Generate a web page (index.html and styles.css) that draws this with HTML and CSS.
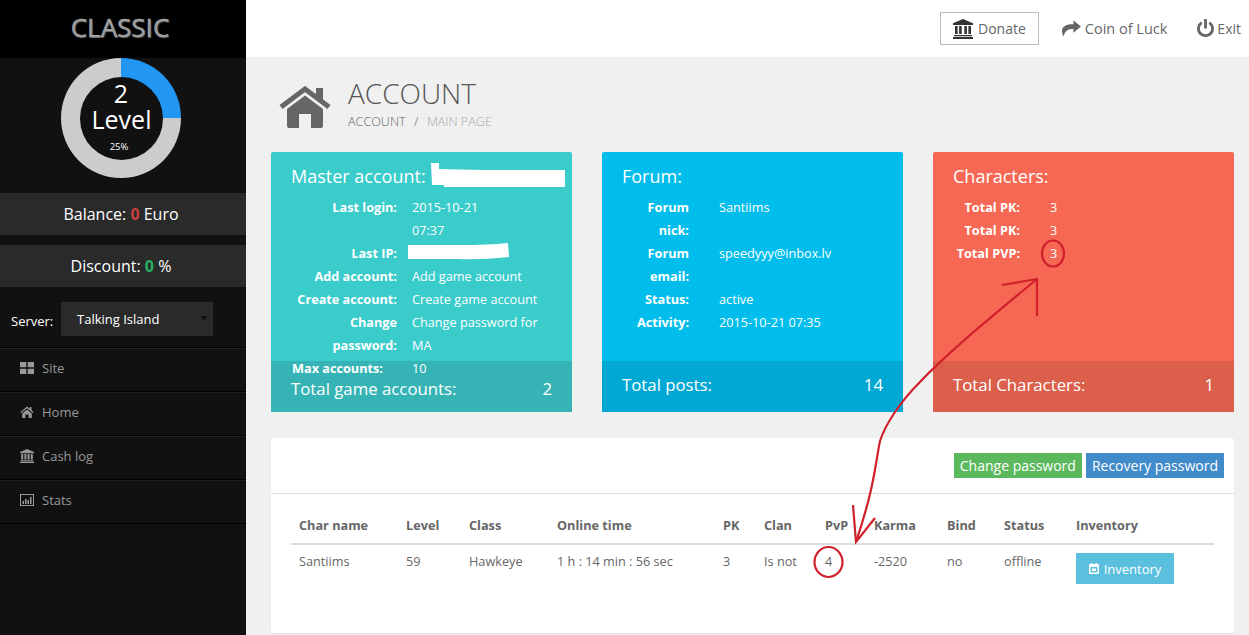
FILE: index.html
```html
<!DOCTYPE html>
<html>
<head>
  <title>Classic - Account</title>
  <link rel="stylesheet" href="styles.css">
</head>
<body>
<div class="app">
  <aside class="sidebar">
    <div class="logo">CLASSIC</div>
    <div class="donut">
      <div class="donut-inner">
        <span class="donut-num">2</span>
        <span class="donut-label">Level</span>
        <span class="donut-pct">25%</span>
      </div>
    </div>
    <div class="stat-bar">Balance: <b class="red">0</b> Euro</div>
    <div class="stat-bar">Discount: <b class="green">0</b> %</div>
    <div class="server">
      <span class="server-label">Server:</span>
      <div class="server-select">Talking Island</div>
    </div>
    <ul class="menu">
      <li><svg class="menu-icon" viewBox="0 0 14 12"><path d="M0 0h6.300v5.300H0zM7.700 0H14v5.300H7.700zM0 6.700h6.300V12H0zM7.700 6.700H14V12H7.700z"/></svg>Site</li>
      <li><svg class="menu-icon" viewBox="0 0 14 12"><path d="M7 0.500 0.300 6.200l.8.900L7 2.200l5.900 4.900.8-.9-2.200-1.900V1h-1.800v1.700zM2.200 7.400V12h3.200V8.600h3.200V12h3.200V7.400L7 3.400z"/></svg>Home</li>
      <li><svg class="menu-icon" viewBox="0 0 14 14"><path d="M7 0 14 3v1.200H0V3zM1.200 5h2v5.500h-2zM4.400 5h2v5.500h-2zM7.600 5h2v5.500h-2zM10.800 5h2v5.500h-2zM.6 11.300h12.800v1H.6zM0 12.800h14V14H0z"/></svg>Cash log</li>
      <li><svg class="menu-icon" viewBox="0 0 14 12"><path d="M0 0h14v12H0zM1 1v10h12V1zM2.500 7h1.500v3H2.500zM5 5h1.500v5H5zM7.500 6h1.500v4H7.500zM10 3h1.500v7H10z" fill-rule="evenodd"/></svg>Stats</li>
    </ul>
  </aside>

  <main class="main">
    <header class="topbar">
      <a class="top-btn boxed">
        <svg class="top-icon dark" viewBox="0 0 20 20"><path d="M10 0 20 4.200V6H0V4.200zM2 7h2.600v8H2zM6.100 7h2.600v8H6.100zM11.300 7h2.600v8h-2.600zM15.400 7H18v8h-2.600zM1 16h18v1.300H1zM0 18h20v2H0z"/></svg>Donate
      </a>
      <a class="top-btn coin"><svg class="top-icon share" viewBox="0 0 20 17"><path d="M12 0l8 6.500-8 6.500V9C6.500 9 3 10.500 1.800 17 .4 14.500 0 12.500 0 11c0-5 5-7 12-7z"/></svg>Coin of Luck</a>
      <a class="top-btn exit"><svg class="top-icon power" viewBox="0 0 18 20"><path d="M7.500 0h3v10h-3z"/><path d="M5 3.800a7.500 7.500 0 1 0 8 0" fill="none" stroke="currentColor" stroke-width="3"/></svg>Exit</a>
    </header>

    <section class="page-head">
      <svg class="page-icon" viewBox="0 0 52 42"><path d="M2 21 26 3l24 18" fill="none" stroke="#666" stroke-width="5"/><path d="M37 2h7v12l-7-5zM8 23 26 9.500 44 23v17a2 2 0 0 1-2 2H32V28H20v14H10a2 2 0 0 1-2-2z" fill="#666"/></svg>
      <div>
        <h1>ACCOUNT</h1>
        <div class="crumbs"><span>ACCOUNT</span><i>/</i><span class="crumb-last">MAIN PAGE</span></div>
      </div>
    </section>

    <section class="cards">
      <div class="card teal">
        <div class="card-body">
          <h3>Master account:</h3>
          <dl class="info info-teal">
            <dt>Last login:</dt><dd>2015-10-21<br>07:37</dd>
            <dt>Last IP:</dt><dd>&nbsp;</dd>
            <dt>Add account:</dt><dd>Add game account</dd>
            <dt>Create account:</dt><dd>Create game account</dd>
            <dt>Change<br>password:</dt><dd>Change password for<br>MA</dd>
            <dt class="left">Max accounts:</dt><dd>10</dd>
          </dl>
        </div>
        <div class="card-foot"><span>Total game accounts:</span><span>2</span></div>
      </div>

      <div class="card blue">
        <div class="card-body">
          <h3>Forum:</h3>
          <dl class="info info-blue">
            <dt>Forum<br>nick:</dt><dd>Santiims</dd>
            <dt>Forum<br>email:</dt><dd>speedyyy@inbox.lv</dd>
            <dt>Status:</dt><dd>active</dd>
            <dt>Activity:</dt><dd>2015-10-21 07:35</dd>
          </dl>
        </div>
        <div class="card-foot"><span>Total posts:</span><span>14</span></div>
      </div>

      <div class="card coral">
        <div class="card-body">
          <h3>Characters:</h3>
          <dl class="info info-blue">
            <dt>Total PK:</dt><dd>3</dd>
            <dt>Total PK:</dt><dd>3</dd>
            <dt>Total PVP:</dt><dd>3</dd>
          </dl>
        </div>
        <div class="card-foot"><span>Total Characters:</span><span>1</span></div>
      </div>
    </section>

    <section class="panel">
      <div class="panel-head">
        <a class="btn btn-green">Change password</a>
        <a class="btn btn-blue">Recovery password</a>
      </div>
      <div class="panel-body">
        <table class="chars">
          <colgroup>
            <col class="c1"><col class="c2"><col class="c3"><col class="c4"><col class="c5"><col class="c6">
            <col class="c7"><col class="c8"><col class="c9"><col class="c10"><col>
          </colgroup>
          <thead>
            <tr><th>Char name</th><th>Level</th><th>Class</th><th>Online time</th><th>PK</th><th>Clan</th><th>PvP</th><th>Karma</th><th>Bind</th><th>Status</th><th>Inventory</th></tr>
          </thead>
          <tbody>
            <tr>
              <td>Santiims</td><td>59</td><td>Hawkeye</td><td>1 h : 14 min : 56 sec</td><td>3</td><td>Is not</td><td>4</td><td>-2520</td><td>no</td><td>offline</td>
              <td><a class="btn-inv"><svg class="inv-icon" viewBox="0 0 10 11"><path fill-rule="evenodd" d="M2 0h1.500v1h3V0H8v1h1a1 1 0 0 1 1 1v8a1 1 0 0 1-1 1H1a1 1 0 0 1-1-1V2a1 1 0 0 1 1-1h1zM1.500 4v5.500h7V4zM3 5.500h4V8H3z"/></svg>Inventory</a></td>
            </tr>
          </tbody>
        </table>
      </div>
    </section>
  </main>
</div>

<!-- hand drawn marks on top of the page -->
<svg class="marks" viewBox="0 0 1249 635">
  <path d="M431 163h8v6l45 1h81v17H444v-2h-12z" fill="#fff"/>
  <path d="M408 245h50q30 0 50-2l1 14q-30 3-52 2h-49z" fill="#fff"/>
  <g fill="none" stroke="#d0202c" stroke-width="2.200">
    <ellipse cx="1053" cy="253.500" rx="11" ry="13"/>
    <path d="M1002 285q18-3 35-6l0 37"/>
    <path d="M1037 279C1000 310 950 350 920 382C900 402 885 425 880 441C875 465 875 485 856 542"/>
    <path d="M853 505L856 542L875 518"/>
    <ellipse cx="828.500" cy="562" rx="14" ry="15"/>
  </g>
</svg>
</body>
</html>
```

FILE: styles.css
```css
* {
  box-sizing: border-box;
}
body {
  margin: 0;
  height: 635px;
  overflow: hidden;
  position: relative;
  font-family: "Open Sans", sans-serif;
  font-size: 12.7px;
  color: #666;
  background: #f0f0f0;
}
.app {
  display: flex;
  height: 635px;
}

/* sidebar */
.sidebar {
  width: 246px;
  flex-shrink: 0;
  background: #111;
  color: #fff;
}
.logo {
  height: 58px;
  padding-right: 6px;
  background: #000;
  color: #999;
  font-size: 26px;
  line-height: 54px;
  text-align: center;
  -webkit-text-stroke: 0.4px #bbb;
  text-shadow: 1px 1px 1px #555;
}
.donut {
  width: 120px;
  height: 120px;
  margin: 0 0 15px 61px;
  border-radius: 50%;
  background: conic-gradient(#2196f3 25%, #ccc 0);
  display: flex;
  align-items: center;
  justify-content: center;
}
.donut-inner {
  width: 83px;
  height: 83px;
  border-radius: 50%;
  background: #111;
  display: flex;
  flex-direction: column;
  align-items: center;
}
.donut-num {
  font-size: 25px;
  line-height: 26px;
  margin-top: 3px;
}
.donut-label {
  font-size: 25px;
  line-height: 26px;
  margin-left: 1px;
}
.donut-pct {
  font-size: 9.500px;
  line-height: 12px;
  margin-top: 9px;
  margin-right: 4px;
}
.stat-bar {
  height: 42px;
  margin-bottom: 10px;
  padding-right: 4px;
  background: #2a2a2a;
  font-size: 16px;
  line-height: 42px;
  text-align: center;
}
.red {
  color: #c9403c;
}
.green {
  color: #27ae60;
}
.server {
  display: flex;
  align-items: center;
  height: 60px;
  padding: 4px 0 0 11px;
  margin-top: -10px;
  font-size: 13px;
}
.server-label {
  width: 50px;
  margin-top: 4px;
}
.server-select {
  position: relative;
  width: 152px;
  height: 34px;
  padding-left: 16px;
  background: #2a2a2a;
  line-height: 34px;
}
.server-select::after {
  content: "";
  position: absolute;
  right: 6px;
  top: 14px;
  border: 3.500px solid transparent;
  border-top: 5px solid #111;
}
.menu {
  list-style: none;
  margin: 0;
  padding: 0;
  border-bottom: 1px solid #000;
  font-size: 13px;
}
.menu li {
  display: flex;
  align-items: center;
  height: 44px;
  padding: 0 0 4px 20px;
  border-top: 1px solid #000;
  box-shadow: inset 0 1px 0 #1f1f1f;
  color: #999;
}
.menu-icon {
  width: 14px;
  height: 14px;
  margin-right: 8px;
  fill: #999;
}

/* top bar */
.main {
  flex: 1;
  min-width: 0;
}
.topbar {
  display: flex;
  justify-content: flex-end;
  align-items: center;
  height: 57px;
  padding-right: 8px;
  background: #fff;
  font-size: 14px;
}
.top-btn {
  display: flex;
  align-items: center;
  color: #666;
}
.top-btn.boxed {
  height: 33px;
  padding: 0 12px;
  margin-right: 23px;
  border: 1px solid #bbb;
}
.top-btn.coin {
  font-size: 14.500px;
}
.top-btn.exit {
  margin-left: 30px;
}
.top-icon {
  fill: currentColor;
  margin-right: 4px;
}
.top-icon.dark {
  width: 20px;
  height: 20px;
  margin-right: 5px;
  color: #333;
}
.top-icon.share {
  width: 19px;
  height: 17px;
}
.top-icon.power {
  width: 17px;
  height: 19px;
  margin-right: 3px;
}

/* page heading */
.page-head {
  display: flex;
  height: 95px;
  padding: 21px 0 0 33px;
}
.page-icon {
  width: 52px;
  height: 42px;
  margin: 8px 17px 0 0;
}
h1 {
  margin: 0;
  font-size: 28px;
  font-weight: 300;
  line-height: 30px;
  color: #555;
}
.crumbs {
  font-size: 12.600px;
  font-weight: 300;
  line-height: 16px;
  margin-top: 6px;
}
.crumbs i {
  font-style: normal;
  margin: 0 8.500px;
}
.crumb-last {
  color: #aaa;
}

/* cards */
.cards {
  display: flex;
  gap: 30px;
  margin-left: 25px;
}
.card {
  width: 301px;
  height: 260px;
  border-radius: 2px;
  color: #fff;
  display: flex;
  flex-direction: column;
}
.teal {
  background: #3acbcb;
}
.teal .card-foot {
  background: #36b4b5;
  padding-top: 3px;
}
.blue {
  background: #00bdec;
}
.blue .card-foot {
  background: #00a8d3;
  padding-bottom: 5px;
}
.coral {
  background: #f66853;
}
.coral .card-foot {
  background: #dc5f4c;
  padding-bottom: 5px;
}
.card-body {
  height: 209px;
  padding: 12px 20px 0;
  position: relative;
  z-index: 1;
}
.card-body h3 {
  margin: 0 0 8px;
  font-size: 18px;
  font-weight: 400;
  line-height: 24px;
}
.card-foot {
  flex: 1;
  display: flex;
  justify-content: space-between;
  align-items: center;
  padding: 0 20px;
  font-size: 16.800px;
}
.info {
  display: grid;
  column-gap: 15px;
  margin: 0;
  line-height: 23px;
}
.info-teal {
  grid-template-columns: 106px 1fr;
}
.info-blue {
  grid-template-columns: 67px 1fr;
  column-gap: 30px;
}
.info dt {
  font-weight: 700;
  text-align: right;
}
.info dt.left {
  text-align: left;
  margin-left: 1px;
}
.info dd {
  margin: 0;
}

/* table panel */
.panel {
  width: 963px;
  height: 195px;
  margin: 26px 0 0 25px;
  background: #fff;
  border-radius: 3px;
  box-shadow: 0 1px 1px rgba(0, 0, 0, 0.08);
}
.panel-head {
  display: flex;
  justify-content: flex-end;
  gap: 4px;
  height: 56px;
  padding: 15px 10px 0 0;
  border-bottom: 1px solid #ddd;
}
.btn {
  height: 25px;
  padding: 0 6px;
  color: #fff;
  font-size: 14px;
  line-height: 25px;
}
.btn-green {
  background: #5cb85c;
}
.btn-blue {
  background: #428bca;
}
.panel-body {
  padding: 20px 20px 0;
}
.chars {
  width: 923px;
  border-collapse: collapse;
  table-layout: fixed;
}
.chars th {
  height: 30px;
  padding: 0 0 8px 8px;
  text-align: left;
  font-weight: 700;
  border-bottom: 2px solid #ddd;
}
.chars td {
  padding: 7px 0 0 8px;
  vertical-align: top;
  line-height: 18px;
}
.c1 { width: 107px; }
.c2 { width: 63px; }
.c3 { width: 88px; }
.c4 { width: 166px; }
.c5 { width: 41px; }
.c6 { width: 61px; }
.c7 { width: 49px; }
.c8 { width: 73px; }
.c9 { width: 57px; }
.c10 { width: 72px; }
.btn-inv {
  display: flex;
  align-items: center;
  justify-content: center;
  width: 98px;
  height: 31px;
  margin-top: 1px;
  background: #5bc0de;
  color: #fff;
  font-size: 13px;
}
.inv-icon {
  width: 10px;
  height: 11px;
  margin-right: 5px;
  fill: #fff;
}

/* annotation layer */
.marks {
  position: absolute;
  top: 0;
  left: 0;
  width: 1249px;
  height: 635px;
  pointer-events: none;
}
```
